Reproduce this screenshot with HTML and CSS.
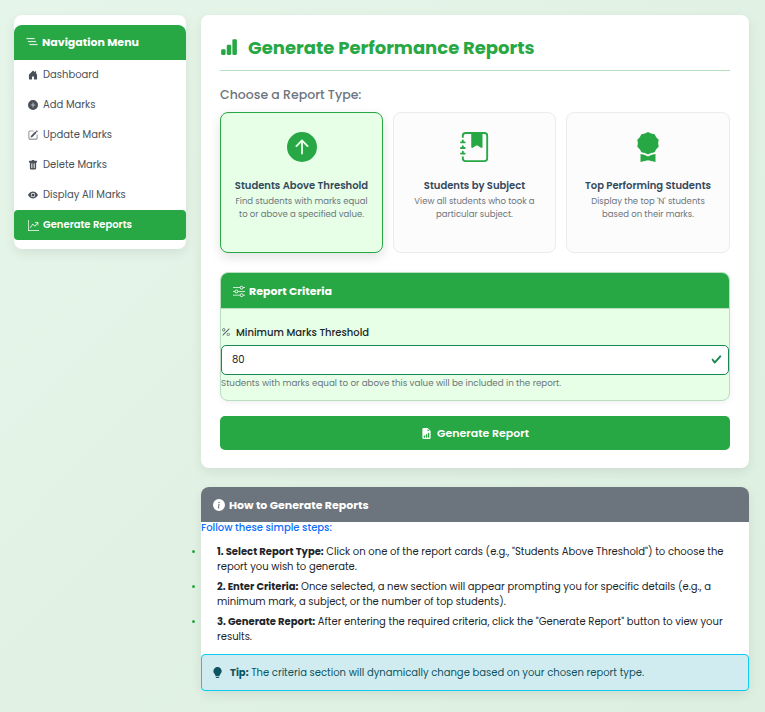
FILE: index.html
```html
<!DOCTYPE html>
<html lang="en">
<head>
<meta charset="utf-8">
<title>Generate Performance Reports</title>
<link rel="stylesheet" href="styles.css">
</head>
<body>
<div class="layout">
  <nav class="sidebar">
    <div class="side-head"><svg class="ic" viewBox="0 0 16 16"><path d="M4.5 11.5A.5.5 0 0 1 5 11h10a.5.5 0 0 1 0 1H5a.5.5 0 0 1-.5-.5m-2-4A.5.5 0 0 1 3 7h10a.5.5 0 0 1 0 1H3a.5.5 0 0 1-.5-.5m-2-4A.5.5 0 0 1 1 3h10a.5.5 0 0 1 0 1H1a.5.5 0 0 1-.5-.5"/></svg><span>Navigation Menu</span></div>
    <a class="item"><svg class="ic" viewBox="0 0 16 16"><path d="M6.5 14.5v-3.505c0-.245.25-.495.5-.495h2c.25 0 .5.25.5.5v3.5a.5.5 0 0 0 .5.5h4a.5.5 0 0 0 .5-.5v-7a.5.5 0 0 0-.146-.354L13 5.793V2.5a.5.5 0 0 0-.5-.5h-1a.5.5 0 0 0-.5.5v1.293L8.354 1.146a.5.5 0 0 0-.708 0l-6 6A.5.5 0 0 0 1.5 7.5v7a.5.5 0 0 0 .5.5h4a.5.5 0 0 0 .5-.5"/></svg><span>Dashboard</span></a>
    <a class="item"><svg class="ic" viewBox="0 0 16 16"><path d="M16 8A8 8 0 1 1 0 8a8 8 0 0 1 16 0M8.5 4.5a.5.5 0 0 0-1 0v3h-3a.5.5 0 0 0 0 1h3v3a.5.5 0 0 0 1 0v-3h3a.5.5 0 0 0 0-1h-3z"/></svg><span>Add Marks</span></a>
    <a class="item"><svg class="ic" viewBox="0 0 16 16"><path d="M15.502 1.94a.5.5 0 0 1 0 .706L14.459 3.69l-2-2L13.502.646a.5.5 0 0 1 .707 0l1.293 1.293zm-1.75 2.456-2-2L4.939 9.21a.5.5 0 0 0-.121.196l-.805 2.414a.25.25 0 0 0 .316.316l2.414-.805a.5.5 0 0 0 .196-.12l6.813-6.814z"/><path d="M1 13.5A1.5 1.5 0 0 0 2.5 15h11a1.5 1.5 0 0 0 1.5-1.5v-6a.5.5 0 0 0-1 0v6a.5.5 0 0 1-.5.5h-11a.5.5 0 0 1-.5-.5v-11a.5.5 0 0 1 .5-.5H9a.5.5 0 0 0 0-1H2.5A1.5 1.5 0 0 0 1 2.5z"/></svg><span>Update Marks</span></a>
    <a class="item"><svg class="ic" viewBox="0 0 16 16"><path d="M2.5 1a1 1 0 0 0-1 1v1a1 1 0 0 0 1 1H3v9a2 2 0 0 0 2 2h6a2 2 0 0 0 2-2V4h.5a1 1 0 0 0 1-1V2a1 1 0 0 0-1-1H10a1 1 0 0 0-1-1H7a1 1 0 0 0-1 1zm3 4a.5.5 0 0 1 .5.5v7a.5.5 0 0 1-1 0v-7a.5.5 0 0 1 .5-.5M8 5a.5.5 0 0 1 .5.5v7a.5.5 0 0 1-1 0v-7A.5.5 0 0 1 8 5m3 .5v7a.5.5 0 0 1-1 0v-7a.5.5 0 0 1 1 0"/></svg><span>Delete Marks</span></a>
    <a class="item"><svg class="ic" viewBox="0 0 16 16"><path d="M10.5 8a2.5 2.5 0 1 1-5 0 2.5 2.5 0 0 1 5 0"/><path d="M0 8s3-5.5 8-5.5S16 8 16 8s-3 5.5-8 5.5S0 8 0 8m8 3.5a3.5 3.5 0 1 0 0-7 3.5 3.5 0 0 0 0 7"/></svg><span>Display All Marks</span></a>
    <a class="item active"><svg class="ic" viewBox="0 0 16 16"><path d="M0 0h1v15h15v1H0zm10 3.5a.5.5 0 0 1 .5-.5h4a.5.5 0 0 1 .5.5v4a.5.5 0 0 1-1 0V4.9l-3.613 4.417a.5.5 0 0 1-.74.037L7.06 6.767l-3.656 5.027a.5.5 0 0 1-.808-.588l4-5.5a.5.5 0 0 1 .758-.06l2.609 2.61L13.445 4H10.5a.5.5 0 0 1-.5-.5"/></svg><span>Generate Reports</span></a>
  </nav>
  <main class="content">
    <section class="panel">
      <h1><svg viewBox="0 0 16 16"><path d="M1 11a1 1 0 0 1 1-1h2a1 1 0 0 1 1 1v3a1 1 0 0 1-1 1H2a1 1 0 0 1-1-1zm5-4a1 1 0 0 1 1-1h2a1 1 0 0 1 1 1v7a1 1 0 0 1-1 1H7a1 1 0 0 1-1-1zm5-5a1 1 0 0 1 1-1h2a1 1 0 0 1 1 1v12a1 1 0 0 1-1 1h-2a1 1 0 0 1-1-1z"/></svg><span>Generate Performance Reports</span></h1>
      <h2>Choose a Report Type:</h2>
      <div class="cards">
        <div class="card selected">
          <svg viewBox="0 0 16 16"><path d="M16 8A8 8 0 1 0 0 8a8 8 0 0 0 16 0m-7.5 3.5a.5.5 0 0 1-1 0V5.707L5.354 7.854a.5.5 0 1 1-.708-.708l3-3a.5.5 0 0 1 .708 0l3 3a.5.5 0 0 1-.708.708L8.5 5.707z"/></svg>
          <h3>Students Above Threshold</h3>
          <p>Find students with marks equal<br>to or above a specified value.</p>
        </div>
        <div class="card">
          <svg viewBox="0 0 16 16"><path d="M6 1h6v7a.5.5 0 0 1-.757.429L9 7.083 6.757 8.43A.5.5 0 0 1 6 8z"/><path d="M3 0h10a2 2 0 0 1 2 2v12a2 2 0 0 1-2 2H3a2 2 0 0 1-2-2v-1h1v1a1 1 0 0 0 1 1h10a1 1 0 0 0 1-1V2a1 1 0 0 0-1-1H3a1 1 0 0 0-1 1v1H1V2a2 2 0 0 1 2-2"/><path d="M1 5v-.5a.5.5 0 0 1 1 0V5h.5a.5.5 0 0 1 0 1h-2a.5.5 0 0 1 0-1zm0 3v-.5a.5.5 0 0 1 1 0V8h.5a.5.5 0 0 1 0 1h-2a.5.5 0 0 1 0-1zm0 3v-.5a.5.5 0 0 1 1 0v.5h.5a.5.5 0 0 1 0 1h-2a.5.5 0 0 1 0-1z"/></svg>
          <h3>Students by Subject</h3>
          <p>View all students who took a<br>particular subject.</p>
        </div>
        <div class="card">
          <svg viewBox="0 0 16 16"><path d="m8 0 1.669.864 1.858.282.842 1.68 1.337 1.32L13.4 6l.306 1.854-1.337 1.32-.842 1.68-1.858.282L8 12l-1.669-.864-1.858-.282-.842-1.68-1.337-1.32L2.6 6l-.306-1.854 1.337-1.32.842-1.68L6.331.864z"/><path d="M4 11.794V16l4-1 4 1v-4.206l-2.018.306L8 13.126 6.018 12.1z"/></svg>
          <h3>Top Performing Students</h3>
          <p>Display the top 'N' students<br>based on their marks.</p>
        </div>
      </div>
      <div class="criteria">
        <div class="bar green"><svg class="ic" viewBox="0 0 16 16"><path fill-rule="evenodd" d="M11.5 2a1.5 1.5 0 1 0 0 3 1.5 1.5 0 0 0 0-3M9.05 3a2.5 2.5 0 0 1 4.9 0H16v1h-2.05a2.5 2.5 0 0 1-4.9 0H0V3zM4.5 7a1.5 1.5 0 1 0 0 3 1.5 1.5 0 0 0 0-3M2.05 8a2.5 2.5 0 0 1 4.9 0H16v1H6.95a2.5 2.5 0 0 1-4.9 0H0V8zm9.45 4a1.5 1.5 0 1 0 0 3 1.5 1.5 0 0 0 0-3m-2.45 1a2.5 2.5 0 0 1 4.9 0H16v1h-2.05a2.5 2.5 0 0 1-4.9 0H0v-1z"/></svg><span>Report Criteria</span></div>
        <label><svg class="ic" viewBox="0 0 16 16"><path d="M13.442 2.558a.625.625 0 0 1 0 .884l-10 10a.625.625 0 1 1-.884-.884l10-10a.625.625 0 0 1 .884 0M4.5 6a1.5 1.5 0 1 1 0-3 1.5 1.5 0 0 1 0 3m0 1a2.5 2.5 0 1 0 0-5 2.5 2.5 0 0 0 0 5m7 6a1.5 1.5 0 1 1 0-3 1.5 1.5 0 0 1 0 3m0 1a2.5 2.5 0 1 0 0-5 2.5 2.5 0 0 0 0 5"/></svg><span>Minimum Marks Threshold</span></label>
        <div class="field"><span>80</span><svg viewBox="0 0 8 8"><path d="M2.3 6.73.6 4.53c-.4-1.04.46-1.4 1.1-.8l1.1 1.4 3.4-3.8c.6-.63 1.6-.27 1.2.7l-4 4.6c-.43.5-.8.4-1.1.1z"/></svg></div>
        <div class="hint">Students with marks equal to or above this value will be included in the report.</div>
      </div>
      <div class="button"><svg class="ic" viewBox="0 0 16 16"><path d="M9.293 0H4a2 2 0 0 0-2 2v12a2 2 0 0 0 2 2h8a2 2 0 0 0 2-2V4.707A1 1 0 0 0 13.707 4L10 .293A1 1 0 0 0 9.293 0M9.5 3.5v-2l3 3h-2a1 1 0 0 1-1-1m.5 10v-6a.5.5 0 0 1 .5-.5h1a.5.5 0 0 1 .5.5v6a.5.5 0 0 1-.5.5h-1a.5.5 0 0 1-.5-.5m-2.5.5a.5.5 0 0 1-.5-.5v-4a.5.5 0 0 1 .5-.5h1a.5.5 0 0 1 .5.5v4a.5.5 0 0 1-.5.5zm-3 0a.5.5 0 0 1-.5-.5v-2a.5.5 0 0 1 .5-.5h1a.5.5 0 0 1 .5.5v2a.5.5 0 0 1-.5.5z"/></svg><span>Generate Report</span></div>
    </section>
    <section class="help">
      <div class="bar gray"><svg class="ic" viewBox="0 0 16 16"><path d="M8 16A8 8 0 1 0 8 0a8 8 0 0 0 0 16m.93-9.412-1 4.705c-.07.34.029.533.304.533.194 0 .487-.07.686-.246l-.088.416c-.287.346-.92.598-1.465.598-.703 0-1.002-.422-.808-1.319l.738-3.468c.064-.293.006-.399-.287-.47l-.451-.081.082-.381 2.29-.287zM8 5.5a1 1 0 1 1 0-2 1 1 0 0 1 0 2"/></svg><span>How to Generate Reports</span></div>
      <p class="lead">Follow these simple steps:</p>
      <ul>
        <li><b>1. Select Report Type:</b> Click on one of the report cards (e.g., "Students Above Threshold") to choose the<br>report you wish to generate.</li>
        <li><b>2. Enter Criteria:</b> Once selected, a new section will appear prompting you for specific details (e.g., a<br>minimum mark, a subject, or the number of top students).</li>
        <li><b>3. Generate Report:</b> After entering the required criteria, click the "Generate Report" button to view your<br>results.</li>
      </ul>
      <div class="tip"><svg class="ic" viewBox="0 0 16 16"><path d="M2 6a6 6 0 1 1 10.174 4.31c-.203.196-.359.4-.453.619l-.762 1.769A.5.5 0 0 1 10.5 13h-5a.5.5 0 0 1-.46-.302l-.761-1.77a2 2 0 0 0-.453-.618A5.98 5.98 0 0 1 2 6m3 8.5a.5.5 0 0 1 .5-.5h5a.5.5 0 0 1 0 1l-.224.447a1 1 0 0 1-.894.553H6.618a1 1 0 0 1-.894-.553L5.5 15a.5.5 0 0 1-.5-.5"/></svg><p><b>Tip:</b> The criteria section will dynamically change based on your chosen report type.</p></div>
    </section>
  </main>
</div>
</body>
</html>
```
FILE: styles.css
```css
* { box-sizing: border-box; }
body {
  margin: 0;
  min-height: 712px;
  background: linear-gradient(135deg, #e6f5e9, #dcefe0);
  font: 10px/15px Poppins, Inter, "Open Sans", sans-serif;
  color: #212529;
  white-space: nowrap;
}
h1, h2, h3, p, ul { margin: 0; padding: 0; }
svg { fill: currentColor; flex: none; display: block; }
.ic { width: 11px; height: 11px; }
.layout { display: flex; align-items: flex-start; gap: 15px; padding: 15px 16px 0 14px; }
.sidebar {
  width: 172px; height: 234px; padding-top: 10px;
  background: #fff; border-radius: 8px;
  box-shadow: 0 4px 12px rgba(0,0,0,.08);
}
.side-head, .bar {
  display: flex; align-items: center; height: 35px; padding-left: 12px; gap: 4px;
  background: #28a745; color: #fff; font-weight: 700; font-size: 11px; line-height: 17px;
  border-radius: 8px 8px 0 0;
}
.side-head .ic, .bar .ic { width: 12px; height: 12px; }
.side-head .ic { margin-top: -1px; stroke: currentColor; stroke-width: .3; }
.item { display: flex; align-items: center; height: 30px; padding: 0 0 1px 14px; gap: 5px; color: #495057; }
.item .ic { width: 10px; height: 10px; margin-top: 1px; }
.item.active { background: #28a745; color: #fff; font-weight: 600; border-radius: 4px; }
.item.active .ic { width: 11px; height: 11px; margin-right: -1px; }
.content { width: 548px; }
.panel {
  height: 453px; padding: 18px 19px 0; background: #fff; border-radius: 8px;
  box-shadow: 0 4px 12px rgba(0,0,0,.08);
}
h1 {
  display: flex; align-items: center; gap: 10px; height: 38px; padding-bottom: 8px;
  border-bottom: 1px solid #b7dfc0; color: #28a745; font-size: 18px; font-weight: 700; line-height: 27px;
}
h1 svg { width: 18px; height: 18px; margin-top: -2px; }
h2 { height: 41px; padding-top: 15px; font-size: 12.5px; line-height: 18px; font-weight: 500; color: #6c757d; }
.cards { display: grid; grid-template-columns: 163px 163px 164px; gap: 10px; height: 141px; }
.card {
  border: 1px solid #e9ecef; border-radius: 8px; background: #fcfcfc;
  display: flex; flex-direction: column; align-items: center; text-align: center; padding-top: 19px;
}
.card.selected { border-color: #28a745; background: #e6ffe6; box-shadow: 0 4px 12px rgba(0,0,0,.12); }
.card svg { width: 30px; height: 30px; color: #28a745; }
.card h3 { margin-top: 15px; font-size: 10px; line-height: 17px; font-weight: 600; color: #34495e; }
.card p { margin-top: 1px; font-size: 8.5px; line-height: 13px; color: #6c757d; }
.criteria {
  height: 129px; margin-top: 19px; border: 1px solid #b7dfc0; border-radius: 8px;
  background: #e6ffe6; box-shadow: 0 2px 6px rgba(0,0,0,.06);
}
.green { border-bottom: 1px solid #b7dfc0; height: 36px; padding-top: 1px; border-radius: 7px 7px 0 0; }
label { display: flex; align-items: center; gap: 5px; height: 36px; padding-top: 11px; font-weight: 500; }
label .ic { width: 10px; height: 10px; margin-top: -1px; color: #495057; }
.field {
  display: flex; align-items: center; justify-content: space-between; height: 30px; padding: 0 6px 1px 10px;
  background: #fff; border: 1px solid #198754; border-radius: 5px;
}
.field svg { width: 11px; height: 11px; color: #198754; }
.hint { color: #6c757d; font-size: 8.75px; line-height: 16px; }
.button {
  display: flex; align-items: center; justify-content: center; gap: 5px; height: 34px; margin-top: 15px;
  background: #28a745; color: #fff; border-radius: 5px; font-size: 11px; font-weight: 600;
}
.help { margin-top: 19px; height: 204px; background: #fff; border-radius: 8px; box-shadow: 0 4px 12px rgba(0,0,0,.08); }
.gray { background: #6c757d; padding-top: 1px; }
.gray .ic { margin-top: -1px; }
.lead { height: 22px; line-height: 12px; font-weight: 500; color: #0d6efd; }
ul { list-style: none; height: 110px; padding-left: 16px; }
li { height: 35px; position: relative; }
li::before { content: ""; position: absolute; left: -25px; top: 6px; width: 3px; height: 3px; border-radius: 50%; background: #28a745; }
b { font-weight: 700; }
.tip {
  display: flex; align-items: center; gap: 7px; height: 37px; padding-left: 10px;
  background: #d1ecf1; border: 1px solid #0dcaf0; border-radius: 4px; color: #0c5460;
}
```
